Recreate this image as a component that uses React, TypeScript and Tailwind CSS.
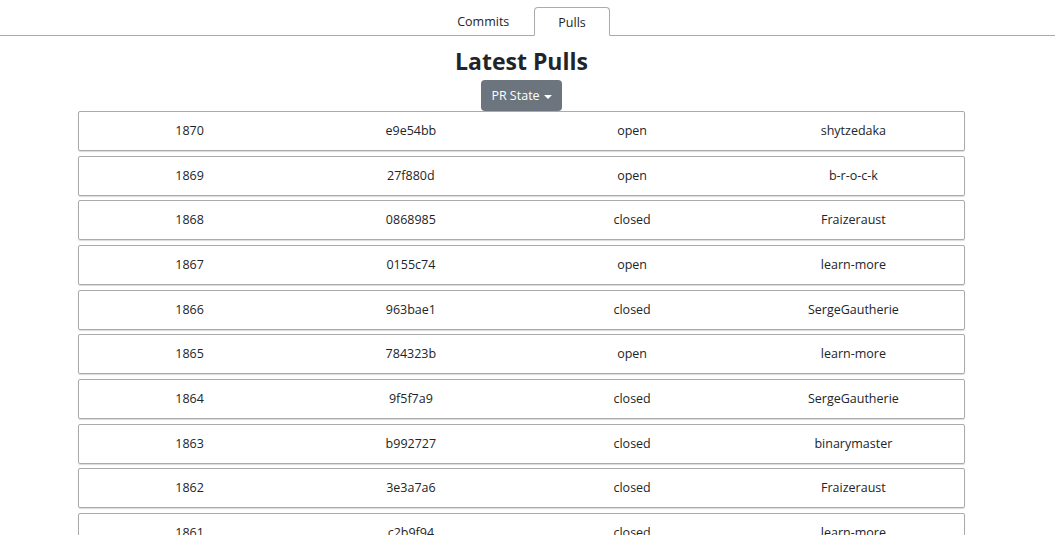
const pulls = [
  { num: 1870, sha: "e9e54bb", state: "open", user: "shytzedaka" },
  { num: 1869, sha: "27f880d", state: "open", user: "b-r-o-c-k" },
  { num: 1868, sha: "0868985", state: "closed", user: "Fraizeraust" },
  { num: 1867, sha: "0155c74", state: "open", user: "learn-more" },
  { num: 1866, sha: "963bae1", state: "closed", user: "SergeGautherie" },
  { num: 1865, sha: "784323b", state: "open", user: "learn-more" },
  { num: 1864, sha: "9f5f7a9", state: "closed", user: "SergeGautherie" },
  { num: 1863, sha: "b992727", state: "closed", user: "binarymaster" },
  { num: 1862, sha: "3e3a7a6", state: "closed", user: "Fraizeraust" },
  { num: 1861, sha: "c2b9f94", state: "closed", user: "learn-more" },
];

export default function App() {
  return (
    <div className="h-[535px] overflow-hidden bg-white text-[#212529] font-['Open_Sans','Noto_Sans',sans-serif] text-[12.5px]">
      {/* Tabs */}
      <div className="mt-[7px] border-b border-[#aaa] flex">
        <div className="w-[1042px] flex justify-center">
          <div className="flex mb-[-1px]">
            <div className="px-[25px] h-[28px] pt-[3px] flex items-center">Commits</div>
            <div className="px-[23px] h-[29px] pt-[3px] flex items-center bg-white border border-[#aaa] border-b-white rounded-t-[4px]">
              Pulls
            </div>
          </div>
        </div>
      </div>

      <div className="w-[1043px] flex flex-col items-center">
        <h1 className="mt-[10px] text-[23px] font-bold leading-[30px]">Latest Pulls</h1>
        <button className="mt-[4px] h-[31px] px-[10px] pt-[2px] rounded-[4px] bg-[#6c757d] text-white text-[12.5px] flex items-center gap-[4px]">
          PR State
          <span className="inline-block w-0 h-0 border-l-[4px] border-r-[4px] border-t-[4px] border-l-transparent border-r-transparent border-t-white" />
        </button>

        <div className="w-[887px] flex flex-col gap-[4.67px]">
          {pulls.map((p) => (
            <div
              key={p.num}
              className="h-[40px] pt-[1px] grid grid-cols-4 items-center text-center border border-[#aaa] rounded-[2px] shadow-[0_1px_1px_rgba(0,0,0,0.15)]"
            >
              <span>{p.num}</span>
              <span>{p.sha}</span>
              <span>{p.state}</span>
              <span>{p.user}</span>
            </div>
          ))}
        </div>
      </div>
    </div>
  );
}
